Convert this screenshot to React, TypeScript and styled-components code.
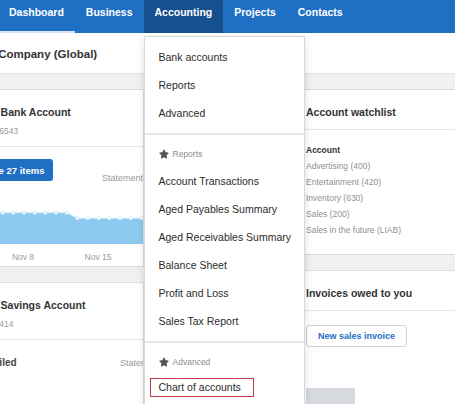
import React from 'react';
import styled, { createGlobalStyle, css } from 'styled-components';
import { FaStar } from 'react-icons/fa';

const GlobalStyle = createGlobalStyle`
	* { box-sizing: border-box; }
	html, body {
		margin: 0;
		padding: 0;
		height: 404px;
		overflow: hidden;
		background: #eff0f2;
	}
	body {
		font-family: "Liberation Sans", Arial, sans-serif;
		color: #333;
	}
`;

const navItems = ['Dashboard', 'Business', 'Accounting', 'Projects', 'Contacts'];

const menuGroups = [
	{ heading: null, items: ['Bank accounts', 'Reports', 'Advanced'] },
	{
		heading: 'Reports',
		items: [
			'Account Transactions',
			'Aged Payables Summary',
			'Aged Receivables Summary',
			'Balance Sheet',
			'Profit and Loss',
			'Sales Tax Report',
		],
	},
	{ heading: 'Advanced', items: ['Chart of accounts'] },
];

const watchlist = [
	'Advertising (400)',
	'Entertainment (420)',
	'Inventory (630)',
	'Sales (200)',
	'Sales in the future (LIAB)',
];

const BalanceChart = () => {
	const step = 10.67;
	const high = Array.from({ length: 13 }, (_, i) => ({ x: 63.7 + (i - 6) * step, y: 22.7 }));
	const low = Array.from({ length: 7 }, (_, i) => ({ x: 138.3 + i * step, y: 28.3 }));
	const pts = [{ x: -2, y: 22.7 }, ...high, ...low, { x: 206, y: 28.3 }];
	const line = pts.map((p, i) => `${i ? 'L' : 'M'}${p.x} ${p.y}`).join(' ');
	const area = `${line} L206 54 L-2 54 Z`;

	return (
		<ChartSvg viewBox="0 0 204 76" width={204} height={76}>
			<path d={area} fill="#8dcaf0" />
			<path d={line} fill="none" stroke="#cfe8f9" strokeWidth={1} />
			{[...high, ...low].map((p, i) => (
				<circle key={i} cx={p.x} cy={p.y} r={1.7} fill="#fff" stroke="#b3dcf6" strokeWidth={0.6} />
			))}
			{[
				{ x: 9, t: 'Nov 1' },
				{ x: 84, t: 'Nov 8' },
				{ x: 159, t: 'Nov 15' },
			].map((l) => (
				<text key={l.t} x={l.x} y={70} textAnchor="middle" fontSize={8.5} fill="#9a9a9a">
					{l.t}
				</text>
			))}
		</ChartSvg>
	);
};

export default function App() {
	return (
		<>
			<GlobalStyle />
			<NavBar>
				<NavList>
					{navItems.map((item) => (
						<NavItem key={item} $active={item === 'Dashboard'} $open={item === 'Accounting'}>
							{item}
							{item === 'Accounting' && (
								<Menu>
									{menuGroups.map((group, gi) => (
										<MenuGroup key={gi}>
											{group.heading && (
												<MenuHeading>
													<FaStar size={10} color="#555" />
													<span>{group.heading}</span>
												</MenuHeading>
											)}
											{group.items.map((entry) => (
												<MenuItem key={entry} href="#" $focused={entry === 'Chart of accounts'}>
													{entry}
												</MenuItem>
											))}
										</MenuGroup>
									))}
								</Menu>
							)}
						</NavItem>
					))}
				</NavList>
			</NavBar>

			<PageHeader>
				<PageTitle>Demo Company (Global)</PageTitle>
			</PageHeader>

			<Content>
				<Columns>
					<Column>
						<Card>
							<CardHeader>
								<CardTitle>Business Bank Account</CardTitle>
								<CardSubtitle>090-8007-006543</CardSubtitle>
							</CardHeader>
							<CardBody $pb={0}>
								<StatRow $split={151}>
									<PrimaryButton>Reconcile 27 items</PrimaryButton>
									<StatLabel $drop>Statement balance</StatLabel>
								</StatRow>
								<BalanceChart />
							</CardBody>
						</Card>
						<Card>
							<CardHeader>
								<CardTitle>Business Savings Account</CardTitle>
								<CardSubtitle>090-8007-00414</CardSubtitle>
							</CardHeader>
							<CardBody $pb={40}>
								<StatRow $split={169}>
									<StatusText>All reconciled</StatusText>
									<StatLabel>Statement balance</StatLabel>
								</StatRow>
							</CardBody>
						</Card>
					</Column>

					<Column>
						<Card>
							<CardHeader $compact>
								<CardTitle>Bills to pay</CardTitle>
							</CardHeader>
							<CardBody $pb={120}>
								<OutlineButton>New bill</OutlineButton>
							</CardBody>
						</Card>
					</Column>

					<Column>
						<Card>
							<CardHeader $compact>
								<CardTitle>Account watchlist</CardTitle>
							</CardHeader>
							<CardBody $pb={16}>
								<WatchList>
									<WatchHead>Account</WatchHead>
									{watchlist.map((w) => (
										<WatchItem key={w}>{w}</WatchItem>
									))}
								</WatchList>
							</CardBody>
						</Card>
						<Card>
							<CardHeader $compact>
								<CardTitle>Invoices owed to you</CardTitle>
							</CardHeader>
							<CardBody $pt={14} $pb={20}>
								<OutlineButton>New sales invoice</OutlineButton>
								<Placeholder />
							</CardBody>
						</Card>
					</Column>
				</Columns>
			</Content>
		</>
	);
}

const NavBar = styled.nav`
	height: 33px;
	background: #1f6fc4;
	position: relative;
	z-index: 10;
`;

const NavList = styled.div`
	display: flex;
	height: 100%;
	margin-left: -2px;
`;

const NavItem = styled.div<{ $active?: boolean; $open?: boolean }>`
	position: relative;
	height: 33px;
	padding: 6px 11px 0;
	font-size: 10.5px;
	line-height: 13px;
	font-weight: 700;
	color: #fff;
	white-space: nowrap;
	background: ${(p) => (p.$open ? '#17508e' : 'transparent')};
	box-shadow: ${(p) => (p.$active ? 'inset 0 -2px 0 #d6e6f6' : 'none')};
`;

const Menu = styled.div`
	position: absolute;
	left: 0;
	top: 36px;
	width: 161px;
	background: #fff;
	border: 1px solid #d9d9d9;
	box-shadow: 0 3px 8px rgba(0, 0, 0, 0.13);
	font-weight: 400;
`;

const MenuGroup = styled.div`
	padding: 6px 0;

	& + & {
		border-top: 2px solid #e6e7e8;
	}
`;

const MenuHeading = styled.div`
	display: flex;
	align-items: center;
	gap: 4px;
	height: 26px;
	padding-left: 14px;
	font-size: 8.5px;
	color: #8c8c8c;
`;

const MenuItem = styled.a<{ $focused?: boolean }>`
	display: block;
	height: 28px;
	line-height: 28px;
	padding-left: 14px;
	font-size: 10.5px;
	color: #2b2b2b;
	text-decoration: none;
	white-space: nowrap;

	${(p) =>
		p.$focused &&
		css`
			width: 104px;
			height: 19px;
			line-height: 17px;
			margin: 3px 0 6px 5px;
			padding-left: 8px;
			border: 1px solid #c23a4e;
		`}
`;

const PageHeader = styled.header`
	height: 41px;
	padding-top: 14px;
	background: #fff;
	border-bottom: 1px solid #e2e3e5;
`;

const PageTitle = styled.h1`
	margin: 0 0 0 -37px;
	font-size: 11.5px;
	line-height: 15px;
	font-weight: 700;
	color: #333;
	white-space: nowrap;
`;

const Content = styled.main`
	padding-top: 15px;
	background: #eff0f2;
`;

const Columns = styled.div`
	display: grid;
	grid-template-columns: 206px 119px 250px;
	column-gap: 15px;
	align-items: start;
	margin-left: -62px;
`;

const Column = styled.div`
	display: flex;
	flex-direction: column;
	gap: 15px;
`;

const Card = styled.section`
	background: #fff;
	border: 1px solid #dcdddf;
	overflow: hidden;
`;

const CardHeader = styled.div<{ $compact?: boolean }>`
	padding: ${(p) => (p.$compact ? '15px 12px 10px' : '15px 12px 9px')};
	border-bottom: 1px solid #e4e5e7;
`;

const CardTitle = styled.h2`
	margin: 0;
	font-size: 10.5px;
	line-height: 14px;
	font-weight: 700;
	color: #333;
	white-space: nowrap;
`;

const CardSubtitle = styled.div`
	margin-top: 6px;
	font-size: 8.5px;
	line-height: 12px;
	color: #999;
	white-space: nowrap;
`;

const CardBody = styled.div<{ $pt?: number; $pb?: number }>`
	padding: ${(p) => p.$pt ?? 12}px 12px ${(p) => p.$pb ?? 12}px;
`;

const StatRow = styled.div<{ $split: number }>`
	display: grid;
	grid-template-columns: ${(p) => p.$split}px auto;
	align-items: start;
	white-space: nowrap;
`;

const PrimaryButton = styled.button`
	justify-self: start;
	height: 22px;
	padding: 0 8px;
	border: none;
	border-radius: 3px;
	background: #1f6fc4;
	color: #fff;
	font-family: inherit;
	font-size: 9.5px;
	font-weight: 700;
	white-space: nowrap;
`;

const StatusText = styled.div`
	font-size: 10px;
	line-height: 22px;
	font-weight: 700;
	color: #444;
`;

const StatLabel = styled.div<{ $drop?: boolean }>`
	padding-top: ${(p) => (p.$drop ? 13 : 5)}px;
	font-size: 9px;
	line-height: 12px;
	color: #999;
`;

const ChartSvg = styled.svg`
	display: block;
	margin: 6px -12px 0;
`;

const WatchList = styled.ul`
	margin: 0;
	padding: 0;
	list-style: none;
	font-size: 8.5px;
	line-height: 16px;
	white-space: nowrap;
`;

const WatchHead = styled.li`
	font-weight: 700;
	color: #333;
`;

const WatchItem = styled.li`
	color: #909090;
`;

const OutlineButton = styled.button`
	display: block;
	height: 22px;
	padding: 0 11px;
	border: 1px solid #cfd1d4;
	border-radius: 3px;
	background: #fff;
	color: #1f6fc4;
	font-family: inherit;
	font-size: 9px;
	font-weight: 700;
	white-space: nowrap;
`;

const Placeholder = styled.div`
	width: 49px;
	height: 20px;
	margin-top: 41px;
	background: #d6d9dd;
`;
